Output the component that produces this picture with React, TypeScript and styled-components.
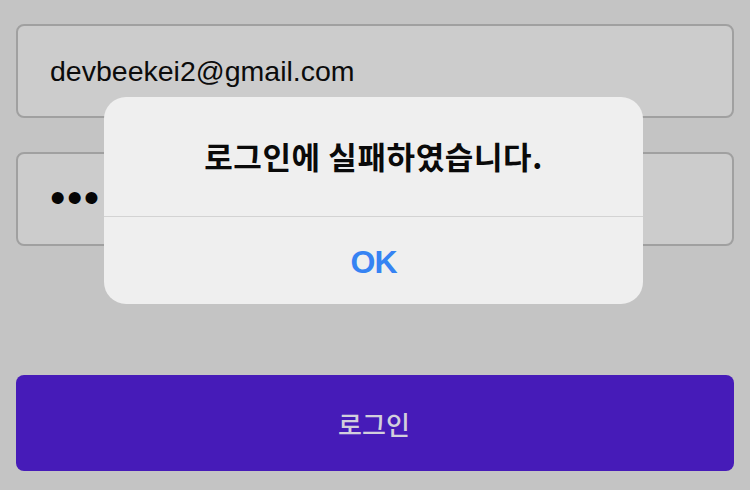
import React from "react";
import styled, { createGlobalStyle } from "styled-components";

const Global = createGlobalStyle`
  html, body { margin: 0; padding: 0; background: #c4c4c4; }
  body { font-family: "Liberation Sans", "Noto Sans CJK KR", sans-serif; }
`;

const Page = styled.div`
  position: relative;
  width: 750px;
  height: 490px;
  box-sizing: border-box;
  padding: 24px 16px 0;
  display: flex;
  flex-direction: column;
  background: #c4c4c4;
  overflow: hidden;
`;

const Field = styled.div<{ $gap: number }>`
  height: 94px;
  box-sizing: border-box;
  margin-bottom: ${(p) => p.$gap}px;
  border: 2px solid #a0a0a0;
  border-radius: 8px;
  background: #cccccc;
  display: flex;
  align-items: center;
  padding-left: 32px;
`;

const FieldText = styled.span`
  font-family: "Liberation Sans", "Noto Sans", sans-serif;
  font-size: 28.5px;
  color: #0b0b0b;
`;

const Dots = styled.span`
  font-family: "Liberation Sans", sans-serif;
  font-size: 44px;
  line-height: 1;
  letter-spacing: 1.5px;
  color: #050505;
  margin-top: -2px;
`;

const LoginButton = styled.div`
  height: 96px;
  border-radius: 8px;
  background: #461bb8;
  display: flex;
  align-items: center;
  justify-content: center;
  padding-right: 2px;
  font-family: "Noto Sans CJK KR", sans-serif;
  font-size: 26px;
  font-weight: 500;
  color: #d2cfdc;
`;

const Alert = styled.div`
  position: absolute;
  left: 104px;
  top: 97px;
  width: 539px;
  height: 207px;
  border-radius: 22px;
  background: #efefef;
  display: flex;
  flex-direction: column;
  overflow: hidden;
`;

const AlertTitle = styled.div`
  height: 119px;
  display: flex;
  align-items: center;
  justify-content: center;
  font-family: "Noto Sans CJK KR", sans-serif;
  font-size: 31px;
  letter-spacing: 0.6px;
  font-weight: 600;
  color: #0a0a0a;
  padding-bottom: 2px;
  box-sizing: border-box;
`;

const Divider = styled.div`
  height: 1px;
  background: #d3d3d3;
`;

const AlertAction = styled.div`
  flex: 1;
  display: flex;
  align-items: center;
  justify-content: center;
  padding-top: 3px;
  font-family: "Liberation Sans", sans-serif;
  font-size: 32px;
  letter-spacing: -1px;
  font-weight: 700;
  color: #3683f3;
`;

export default function App() {
  return (
    <>
      <Global />
      <Page>
        <Field $gap={34}>
          <FieldText>devbeekei2@gmail.com</FieldText>
        </Field>
        <Field $gap={129}>
          <Dots>•••</Dots>
        </Field>
        <LoginButton>로그인</LoginButton>
        <Alert>
          <AlertTitle>로그인에 실패하였습니다.</AlertTitle>
          <Divider />
          <AlertAction>OK</AlertAction>
        </Alert>
      </Page>
    </>
  );
}
